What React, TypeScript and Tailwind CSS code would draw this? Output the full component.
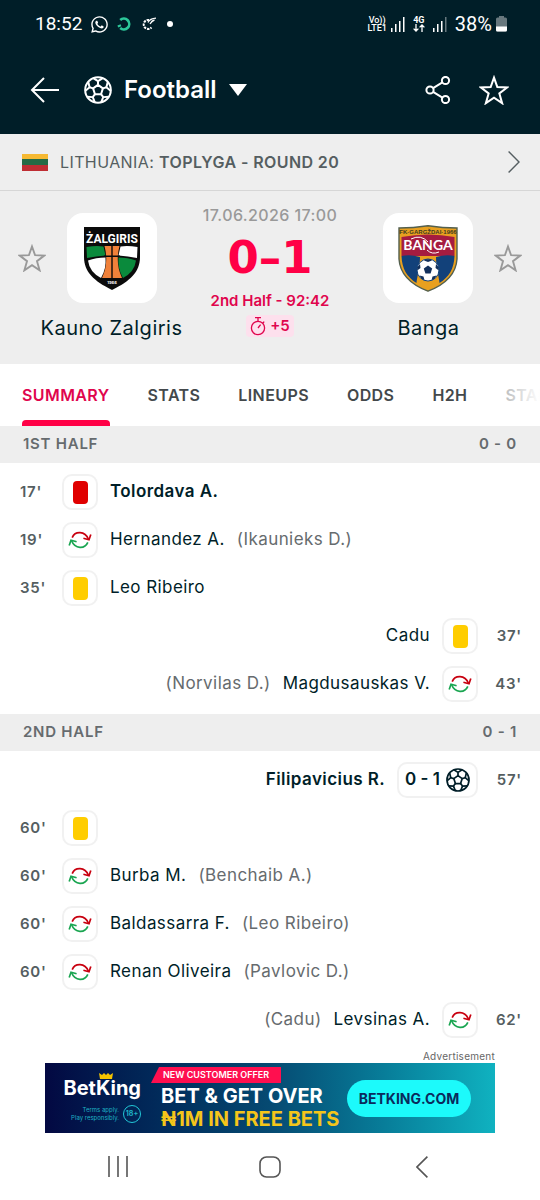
import type { ReactNode } from "react";
import { FaWhatsapp } from "react-icons/fa";

type EventKind = "red" | "yellow" | "sub" | "goal";

interface MatchEvent {
  minute: string;
  kind: EventKind;
  side: "home" | "away";
  player?: string;
  other?: string;
  score?: string;
}

interface Period {
  title: string;
  score: string;
  events: MatchEvent[];
}

const PERIODS: Period[] = [
  {
    title: "1ST HALF",
    score: "0 - 0",
    events: [
      { minute: "17'", kind: "red", side: "home", player: "Tolordava A." },
      { minute: "19'", kind: "sub", side: "home", player: "Hernandez A.", other: "(Ikaunieks D.)" },
      { minute: "35'", kind: "yellow", side: "home", player: "Leo Ribeiro" },
      { minute: "37'", kind: "yellow", side: "away", player: "Cadu" },
      { minute: "43'", kind: "sub", side: "away", player: "Magdusauskas V.", other: "(Norvilas D.)" },
    ],
  },
  {
    title: "2ND HALF",
    score: "0 - 1",
    events: [
      { minute: "57'", kind: "goal", side: "away", player: "Filipavicius R.", score: "0 - 1" },
      { minute: "60'", kind: "yellow", side: "home" },
      { minute: "60'", kind: "sub", side: "home", player: "Burba M.", other: "(Benchaib A.)" },
      { minute: "60'", kind: "sub", side: "home", player: "Baldassarra F.", other: "(Leo Ribeiro)" },
      { minute: "60'", kind: "sub", side: "home", player: "Renan Oliveira", other: "(Pavlovic D.)" },
      { minute: "62'", kind: "sub", side: "away", player: "Levsinas A.", other: "(Cadu)" },
    ],
  },
];

const TABS = ["SUMMARY", "STATS", "LINEUPS", "ODDS", "H2H", "STANDINGS"];

function BallIcon({ className }: { className: string }) {
  return (
    <svg viewBox="0 0 24 24" className={className} fill="none" stroke="currentColor" strokeWidth="1.7" strokeLinejoin="round">
      <circle cx="12" cy="12" r="11" />
      <path d="M12 7.6 16.2 10.6 14.6 15.6H9.4L7.8 10.6Z" />
      <path d="M12 7.6V4.4M16.2 10.6 19.2 9.7M14.6 15.6 16.5 18.1M9.4 15.6 7.5 18.1M7.8 10.6 4.8 9.7" />
      <path d="M7.9 1.8 12 4.4 16.1 1.8M20.4 4.9 19.2 9.7 23 12.8M21.3 17.8 16.5 18.1 14.7 22.7M9.3 22.7 7.5 18.1 2.7 17.8M1 12.8 4.8 9.7 3.6 4.9" />
    </svg>
  );
}

function StarIcon({ className }: { className: string }) {
  return (
    <svg viewBox="0 -1 28 28" className={className} fill="none" stroke="currentColor" strokeWidth="1.9">
      <path d="M14 1.5 17.1 10.2 26.2 10.6 19 16.2 21.6 25.3 14 20.2 6.4 25.3 9 16.2 1.8 10.6 10.9 10.2Z" />
    </svg>
  );
}

function SubIcon() {
  return (
    <svg viewBox="0 0 24 20" className="h-5 w-6" fill="none" strokeWidth="1.7">
      <g stroke="#c8000f">
        <path d="M4.2 7.6C7 .9 17 .6 20.4 9.2" />
        <path d="M15.4 8.2 21 9.8 22.800 4.400" />
      </g>
      <g stroke="#1aa551" transform="rotate(180 12 10)">
        <path d="M4.2 7.6C7 .9 17 .6 20.4 9.2" />
        <path d="M15.4 8.2 21 9.8 22.800 4.400" />
      </g>
    </svg>
  );
}

function StopwatchIcon() {
  return (
    <svg viewBox="0 0 16 20" className="h-5 w-4" fill="none" stroke="currentColor" strokeWidth="1.3">
      <circle cx="8" cy="12" r="6.6" />
      <path d="M8 5.4V2M5 1.6H11M8 12 10.6 8.6M12.7 7.3 14.2 5.6" />
    </svg>
  );
}

function ZalgirisCrest() {
  return (
    <svg viewBox="0 0 56 63" className="h-[63px] w-14">
      <path d="M0 0H56V30C56 45 46 54 28 63 10 54 0 45 0 30Z" fill="#0b0b0b" />
      <path d="M2.5 20Q12 18.5 19.5 19.5L21.5 28.5Q12 29 3 31Z" fill="#0a8a3c" />
      <path d="M53.500 20Q44 18.5 36.5 19.5L34.5 28.5Q44 29 53 31Z" fill="#fff" />
      <path d="M4 33.5Q12 30.5 21.5 30.5 22.5 42 17 51 5.500 45 4 33.500Z" fill="#fff" />
      <path d="M52 33.5Q44 30.500 34.500 30.500 33.500 42 39 51 50.500 45 52 33.500Z" fill="#0a8a3c" />
      <path d="M20.500 19H35.500Q31 36 38 51H18Q25 36 20.500 19Z" fill="#f0813a" />
      <path d="M28 18V52M20 29.300H36" stroke="#0b0b0b" strokeWidth="1.400" />
      <text x="28" y="15.500" textAnchor="middle" fill="#fff" fontSize="12" className="font-['Roboto',sans-serif] font-bold">ŻALGIRIS</text>
      <text x="28" y="57" textAnchor="middle" fill="#fff" fontSize="4" className="font-['Inter',sans-serif] font-bold">1966</text>
    </svg>
  );
}

function BangaCrest() {
  return (
    <svg viewBox="0 0 60 67" className="h-[67px] w-[60px]">
      <path d="M1 3Q15 3 30 .8 45 3 59 3V34C58 50 46 60 30 66.200 14 60 2 50 1 34Z" fill="#e8a01f" stroke="#53604f" strokeWidth="1.400" />
      <path d="M3.500 12Q30 7 56.500 12V31H3.500Z" fill="#a51c40" />
      <path d="M3.500 31Q12 29 22 32C22 43 19 52 18.500 58 9 52 4 44 3.500 31Z" fill="#12417a" />
      <path d="M56.500 31Q48 29 38 32C38 43 41 52 41.500 58 51 52 56 44 56.500 31Z" fill="#12417a" />
      <path d="M13 14Q23 9 30 17M29 25Q34 30 41 27" fill="none" stroke="#fff" strokeWidth="1" />
      <text x="30" y="9" textAnchor="middle" fill="#3d3a20" fontSize="6" className="font-['Liberation_Sans',sans-serif] font-bold">FK·GARGŽDAI·1966</text>
      <text x="30" y="25" textAnchor="middle" fill="#fff" fontSize="14" className="font-['Lato',sans-serif] font-bold">BANGA</text>
      <circle cx="30" cy="45" r="11" fill="#fff" stroke="#12417a" strokeWidth="1" />
      <path d="M30 40.500 34.200 43.600 32.600 48.600H27.400L25.800 43.600Z" fill="#12305c" />
      <path d="M26 35.500 30 37 34 35.500 32 34.200H28ZM38 39 37.500 43 40.800 45.500 40.500 42ZM22 39 22.500 43 19.200 45.500 19.500 42ZM38.500 50.500 34.500 51.500 33.500 55.200 36.500 54ZM21.500 50.500 25.500 51.500 26.500 55.200 23.500 54Z" fill="#12305c" />
    </svg>
  );
}

function SignalBars({ weak }: { weak?: boolean }) {
  return (
    <svg viewBox="0 0 14 16" className="h-4 w-3.5" fill="#fff">
      <rect x="0" y="12" width="1.500" height="4" />
      <rect x="4" y="8" width="1.500" height="8" />
      <rect x="8" y="5" width="1.500" height="11" />
      <rect x="12" y="1" width="1.500" height="15" opacity={weak ? 0.4 : 1} />
    </svg>
  );
}

function StatusBar() {
  return (
    <div className="flex h-12 items-center justify-between pl-[35px] pr-[33px] font-['Roboto',sans-serif] text-[20px]">
      <div className="flex items-center gap-2">
        <span className="text-[19px]">18:52</span>
        <FaWhatsapp className="size-[19px]" />
        <svg viewBox="0 0 14 14" className="size-3.5" fill="none" stroke="#2cc79a" strokeWidth="2.600">
          <path d="M3.200 3A5.400 5.400 0 1 1 3.200 11" />
          <path d="M.8 9.500 4 8.200" strokeWidth="2" />
        </svg>
        <svg viewBox="0 0 16 14" className="ml-0.5 h-3.5 w-4" fill="none" stroke="#fff" strokeWidth="2">
          <path d="M8 3A4.500 4.500 0 1 0 10.500 10.500" strokeDasharray="2.400 1" />
          <path d="M7 5.500Q9 1.500 15 1.200M9 7Q11 3.500 13.500 3" strokeWidth="1.300" />
        </svg>
        <span className="ml-0.5 size-1.5 rounded-full bg-white" />
      </div>
      <div className="flex items-center gap-1">
        <div className="text-center text-[9px] font-medium leading-[8px]">
          <div>Vo))</div>
          <div>LTE1</div>
        </div>
        <SignalBars />
        <div className="ml-1 flex flex-col items-center text-[9px] font-bold leading-[8px]">
          <span>4G</span>
          <svg viewBox="0 0 12 8" className="h-2 w-3" fill="none" stroke="currentColor" strokeWidth="1.300">
            <path d="M3 0V7M.6 4.600 3 7 5.400 4.600M9 8V1M6.600 3.400 9 1 11.400 3.400" />
          </svg>
        </div>
        <div className="ml-1">
          <SignalBars weak />
        </div>
        <span className="ml-1">38%</span>
        <svg viewBox="0 0 11 16" className="h-4 w-[11px]">
          <path d="M3 0H8V1.500H9.500A1.500 1.500 0 0 1 11 3V14A1.500 1.500 0 0 1 9.500 15.500H1.500A1.500 1.500 0 0 1 0 14V3A1.500 1.500 0 0 1 1.500 1.500H3Z" fill="#68787e" />
          <path d="M0 10.500H11V14A1.500 1.500 0 0 1 9.500 15.500H1.500A1.500 1.500 0 0 1 0 14Z" fill="#fff" />
        </svg>
      </div>
    </div>
  );
}

function AppBar() {
  return (
    <div className="flex h-[86px] items-center pb-0.5 pl-[30px] pr-[31px]">
      <button type="button" aria-label="Back">
        <svg viewBox="0 0 30 26" className="h-[26px] w-[30px]" fill="none" stroke="currentColor" strokeWidth="2">
          <path d="M29 13H2M14 1 2 13 14 25" />
        </svg>
      </button>
      <button type="button" className="ml-6 flex items-center gap-3">
        <BallIcon className="size-7" />
        <span className="text-[24px] font-semibold">Football</span>
        <svg viewBox="0 0 18 12" className="h-3 w-[18px]" fill="currentColor">
          <path d="M0 0H18L9 12Z" />
        </svg>
      </button>
      <button type="button" aria-label="Share" className="ml-auto">
        <svg viewBox="0 0 26 28" className="h-7 w-[26px]" fill="none" stroke="currentColor" strokeWidth="2">
          <circle cx="5" cy="14" r="3.600" />
          <circle cx="20.500" cy="4.500" r="3.600" />
          <circle cx="20.500" cy="23.500" r="3.600" />
          <path d="M8.100 12.100 17.400 6.400M8.100 15.900 17.400 21.600" />
        </svg>
      </button>
      <button type="button" aria-label="Add to favourites" className="ml-7">
        <StarIcon className="size-[30px]" />
      </button>
    </div>
  );
}

function LeagueBar() {
  return (
    <a href="#league" className="flex h-[57px] items-center border-b border-[#d6d6d6] pl-[22px] pr-5 text-[#555e61]">
      <span className="flex h-[17px] w-[26px] flex-col">
        <span className="flex-1 bg-[#f6b932]" />
        <span className="flex-1 bg-[#256a45]" />
        <span className="flex-1 bg-[#bf2d33]" />
      </span>
      <span className="ml-3 text-[16px] tracking-wide">
        LITHUANIA: <b className="font-semibold">TOPLYGA - ROUND 20</b>
      </span>
      <svg viewBox="0 0 12 22" className="ml-auto h-[22px] w-3" fill="none" stroke="currentColor" strokeWidth="1.400">
        <path d="M.6.6 11 11 .6 21.400" />
      </svg>
    </a>
  );
}

function Team({ name, away, crest }: { name: string; away?: boolean; crest: ReactNode }) {
  return (
    <div className="min-w-0 flex-1 pt-[22px]">
      <div className={away ? "flex flex-row-reverse items-center gap-[21px] pr-[18px]" : "flex items-center gap-[21px] pl-[18px]"}>
        <button type="button" aria-label={`Follow ${name}`} className="text-[#999]">
          <StarIcon className="size-7" />
        </button>
        <div className="flex size-[90px] items-center justify-center rounded-2xl bg-white">{crest}</div>
      </div>
      <div className={away ? "mt-[13px] pr-7 text-center text-[20px] leading-6 tracking-wide" : "mt-[13px] pl-7 text-center text-[20px] leading-6 tracking-wide"}>
        {name}
      </div>
    </div>
  );
}

function MatchHeader() {
  return (
    <div className="flex pb-6">
      <Team name="Kauno Zalgiris" crest={<ZalgirisCrest />} />
      <div className="flex w-[150px] flex-col items-center pt-3.5">
        <div className="text-[16px] font-medium leading-5 tracking-wide whitespace-nowrap text-[#999]">17.06.2026 17:00</div>
        <div className="font-['DejaVu_Sans',sans-serif] text-[45px] font-bold leading-[66px] whitespace-nowrap text-[#ff0046]">
          0–1
        </div>
        <div className="text-[15px] font-semibold leading-5 whitespace-nowrap text-[#e0054d]">2nd Half - 92:42</div>
        <div className="mt-1 flex h-[22px] items-center gap-1 rounded bg-[#fde0ed] px-1 text-[15px] font-semibold text-[#e0054d]">
          <StopwatchIcon />
          +5
        </div>
      </div>
      <Team name="Banga" away crest={<BangaCrest />} />
    </div>
  );
}

function Tabs() {
  return (
    <nav className="relative flex h-[62px] gap-[38px] overflow-hidden pl-[22px] text-[16px] font-semibold tracking-wide text-[#43484b]">
      {TABS.map((tab, i) => (
        <button
          key={tab}
          type="button"
          className={i === 0 ? "flex shrink-0 flex-col text-[#e0054d]" : "flex shrink-0 flex-col"}
        >
          <span className="flex h-14 items-center pt-1.5">{tab}</span>
          {i === 0 && <span className="h-1.5 w-full rounded-t bg-[#ff0046]" />}
        </button>
      ))}
      <div className="absolute inset-y-0 right-0 w-10 bg-gradient-to-r from-white/60 to-white" />
    </nav>
  );
}

function EventBadge({ event }: { event: MatchEvent }) {
  return (
    <div className="flex h-9 min-w-9 shrink-0 items-center justify-center rounded-[10px] border-2 border-[#f1f1f1] bg-white">
      {event.kind === "red" && <span className="h-[23px] w-[15px] rounded bg-[#e00000]" />}
      {event.kind === "yellow" && <span className="h-[23px] w-[15px] rounded bg-[#ffcd00]" />}
      {event.kind === "sub" && <SubIcon />}
      {event.kind === "goal" && (
        <span className="flex items-center gap-1.5 px-1.5 text-[17px] font-semibold">
          {event.score}
          <BallIcon className="size-6" />
        </span>
      )}
    </div>
  );
}

function EventRow({ event }: { event: MatchEvent }) {
  const away = event.side === "away";
  const strong = event.kind === "red" || event.kind === "goal";

  return (
    <li className={away ? "flex h-12 flex-row-reverse items-center px-[18px]" : "flex h-12 items-center px-5"}>
      <span className={away ? "w-11 text-right text-[15px] font-semibold tracking-wider text-[#555e61]" : "w-[42px] text-[15px] font-semibold tracking-wider text-[#555e61]"}>
        {event.minute}
      </span>
      <EventBadge event={event} />
      {event.player && (
        <span className={strong ? "mx-3 text-[17px] font-semibold tracking-wide" : "mx-3 text-[17px] tracking-wide"}>{event.player}</span>
      )}
      {event.other && <span className="text-[17px] tracking-wide text-[#666b6e]">{event.other}</span>}
    </li>
  );
}

function PeriodSection({ period }: { period: Period }) {
  return (
    <section>
      <h2 className="flex h-[37px] items-center justify-between bg-[#eee] px-[23px] text-[15px] font-semibold tracking-wider text-[#666b6e]">
        <span>{period.title}</span>
        <span>{period.score}</span>
      </h2>
      <ul className="pt-[5px] pb-1.5">
        {period.events.map((event, i) => (
          <EventRow key={i} event={event} />
        ))}
      </ul>
    </section>
  );
}

function AdBanner() {
  return (
    <div className="px-[45px]">
      <div className="text-right text-[10px] leading-[13px] tracking-wide text-[#666]">Advertisement</div>
      <a
        href="#betking"
        className="flex h-[70px] items-center overflow-hidden bg-gradient-to-r from-[#030842] via-[#064a72] to-[#10b2c0] pr-6 text-white"
      >
        <div className="flex w-[106px] shrink-0 flex-col items-end pr-2.5">
          <svg viewBox="0 0 14 6" className="mr-7 h-1.5 w-3.5" fill="#f5c400">
            <path d="M0 0 3 2 5 0 7 2 9 0 11 2 14 0 13 6H1Z" />
          </svg>
          <div className="text-[20px] font-bold leading-[18px]">BetKing</div>
          <div className="mt-2 flex items-center gap-1 text-right text-[6px] leading-[8px] text-[#1fb2c4]">
            <div>
              Terms apply.
              <br />
              Play responsibly.
            </div>
            <span className="flex size-[18px] items-center justify-center rounded-full border border-[#22c8d8] text-[7px] font-bold">18+</span>
          </div>
        </div>
        <div className="whitespace-nowrap">
          <div className="flex h-4 w-[130px] items-center bg-[#ff0f4f] pl-3 text-[9px] font-semibold [clip-path:polygon(8px_0,100%_0,100%_100%,0_100%)]">
            NEW CUSTOMER OFFER
          </div>
          <div className="pl-2.5 text-[20px] font-bold leading-[26px]">BET &amp; GET OVER</div>
          <div className="pl-2.5 text-[20px] font-bold leading-[20px] text-[#f5c51a]">₦1M IN FREE BETS</div>
        </div>
        <span className="ml-auto flex h-[37px] w-[124px] shrink-0 items-center justify-center rounded-full bg-[#1cfafb] text-[14px] font-bold text-[#0a2a5c]">
          BETKING.COM
        </span>
      </a>
    </div>
  );
}

function SystemNav() {
  return (
    <nav className="grid h-[67px] grid-cols-3 items-center justify-items-center px-[42px] text-[#555]">
      <button type="button" aria-label="Recent apps">
        <svg viewBox="0 0 20 22" className="h-[22px] w-5" fill="none" stroke="currentColor" strokeWidth="1.600">
          <path d="M1 0V21M10 0V21M19 0V21" />
        </svg>
      </button>
      <button type="button" aria-label="Home">
        <svg viewBox="0 0 22 22" className="size-[22px]" fill="none" stroke="currentColor" strokeWidth="1.600">
          <rect x="1" y="1" width="20" height="20" rx="6.500" />
        </svg>
      </button>
      <button type="button" aria-label="Back">
        <svg viewBox="0 0 12 22" className="h-[22px] w-3" fill="none" stroke="currentColor" strokeWidth="1.600">
          <path d="M11.400.6 1 11 11.400 21.400" />
        </svg>
      </button>
    </nav>
  );
}

export default function App() {
  return (
    <div className="min-h-screen bg-white font-['Inter',sans-serif] text-[#001e28]">
      <header className="bg-[#001e28] text-white">
        <StatusBar />
        <AppBar />
      </header>
      <div className="bg-[#eee]">
        <LeagueBar />
        <MatchHeader />
      </div>
      <Tabs />
      <main>
        {PERIODS.map((period) => (
          <PeriodSection key={period.title} period={period} />
        ))}
      </main>
      <AdBanner />
      <SystemNav />
    </div>
  );
}
